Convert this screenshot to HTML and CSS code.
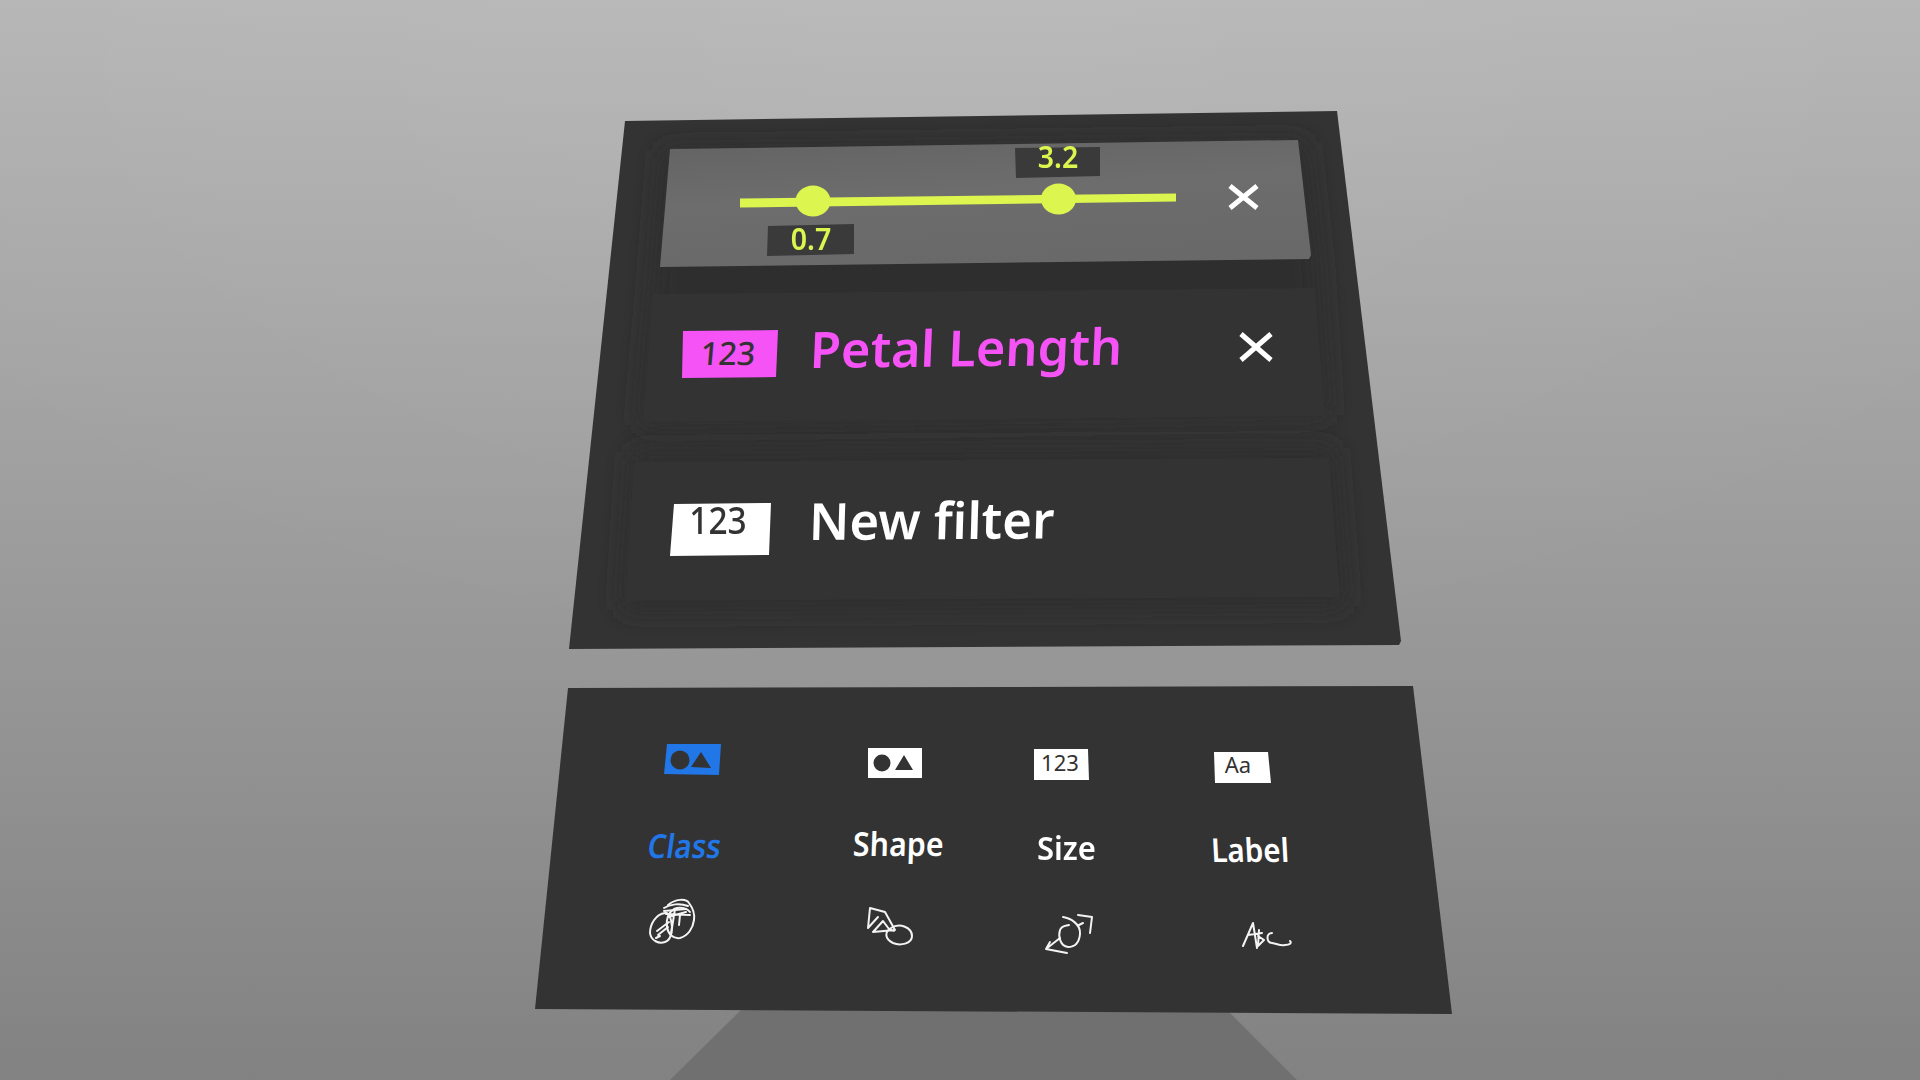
FILE: index.html
```html
<!DOCTYPE html>
<html lang="en">
<head>
  <meta charset="UTF-8">
  <meta name="viewport" content="width=device-width, initial-scale=1.0">
  <title>Filter panel</title>
  <link rel="stylesheet" href="styles.css">
</head>
<body>
  <div class="scene">
    <svg class="stage" width="1920" height="1080" viewBox="0 0 1920 1080">
      <defs>
        <filter id="soft" x="-10%" y="-20%" width="120%" height="140%">
          <feGaussianBlur stdDeviation="12"/>
        </filter>
        <linearGradient id="sliderFill" x1="0" y1="0" x2="0.3" y2="1">
          <stop offset="0" stop-color="#636363"/>
          <stop offset="0.5" stop-color="#6d6d6d"/>
          <stop offset="1" stop-color="#696969"/>
        </linearGradient>
      </defs>

      <!-- stand under the lower panel -->
      <polygon class="stand" points="741,1010 1227,1010 1297,1080 670,1080"/>

      <!-- filter window -->
      <polygon class="panel" points="625,121 1337,111 1401,641 1399,645 569,649"/>
      <polygon class="row-shade" points="663,150 1305,142 1318,262 1328,415 640,425 652,290"/>
      <polygon class="row-shade" points="632,452 1333,448 1345,606 622,610"/>
      <polygon class="slider-panel" points="670,149 1298,140 1311,255 1309,259 660,267"/>
      <polygon class="row" points="653,294 1315,288 1325,416 643,422"/>
      <polygon class="row" points="634,462 1329,458 1340,597 625,601"/>

      <!-- range slider -->
      <polygon class="lime" points="740,198.5 1176,193.5 1176,201.5 740,207.5"/>
      <ellipse class="lime" cx="813" cy="201" rx="17.5" ry="15.5"/>
      <ellipse class="lime" cx="1058.5" cy="199" rx="17.5" ry="15.5"/>
      <polygon class="value-box" points="1015,148 1100,147 1100,176 1016,178"/>
      <polygon class="value-box" points="768,226 854,224 854,254 767,256"/>
      <path class="close" d="M1230,186 L1257,208 M1257,186 L1230,208"/>
      <path class="close" d="M1241,334 L1271,360 M1271,334 L1241,360"/>

      <polygon class="badge-pink" points="683,331 778,330 776,377 682,378"/>
      <polygon class="badge-white" points="674,504 771,503 769,555 670,556"/>

      <!-- encodings window -->
      <polygon class="panel-low" points="568,688 1413,686 1452,1014 535,1009"/>
      <polygon class="badge-blue" points="667,744 721,744 719,775 664,774"/>
      <circle class="shape-dark" cx="680" cy="760" r="9.5"/>
      <polygon class="shape-dark" points="691,767 701,752 711,768"/>
      <polygon class="badge-white" points="868,748 922,748 922,778 868,778"/>
      <circle class="shape-dark" cx="882" cy="763" r="8.5"/>
      <polygon class="shape-dark" points="895,770 904,755 913,770"/>
      <polygon class="badge-white" points="1034,749 1088,749 1089,780 1034,780"/>
      <polygon class="badge-white" points="1214,752 1268,752 1271,783 1215,783"/>

      <!-- hand drawn marks -->
      <path class="sketch" d="M665,913 C656,914 650,924 650,933 C651,941 659,944 665,942 C672,940 673,928 671,920 C670,915 667,912 665,913"/>
      <path class="sketch" d="M668,905 C675,899 686,898 689,903 C692,907 695,913 694,920 C693,928 688,936 680,938 C673,939 668,934 667,927 C666,920 668,913 674,909 C681,906 688,909 690,912"/>
      <path class="sketch" d="M664,908 C670,904 680,903 688,906 M664,911 L686,909 M666,914 L690,915 M668,917 L686,912 M657,931 L669,922 M658,935 L668,927 M656,938 L660,936 M675,909 L671,934 M680,915 L679,925"/>
      <path class="sketch" d="M868,928 L870,908 L885,912 L895,930 L873,932 L883,921 L889,929 L894,931 M868,928 L878,917"/>
      <path class="sketch" d="M891,928 C900,922 912,928 912,936 C912,944 900,946 893,943 C885,939 884,932 891,928"/>
      <path class="sketch" d="M1063,917 C1070,918 1081,924 1080,934 C1079,945 1073,947 1068,947 C1060,946 1058,936 1060,930 C1062,925 1066,926 1069,925"/>
      <path class="sketch" d="M1078,915 L1092,917 L1090,933 M1079,925 L1083,923 M1060,938 L1046,949 L1067,953 M1046,949 L1050,942"/>
      <path class="sketch" d="M1243,946 L1253,923 L1257,948 M1248,935 L1262,933 M1259,930 L1258,946 L1264,940 L1258,936 M1272,933 C1266,933 1266,942 1272,943 C1278,944 1280,946 1285,945 C1290,945 1292,943 1290,941"/>
    </svg>

    <span class="label value value-high">3.2</span>
    <span class="label value value-low">0.7</span>

    <span class="label num num-pink">123</span>
    <span class="label title title-pink">Petal Length</span>

    <span class="label num num-white">123</span>
    <span class="label title title-new">New filter</span>

    <span class="label num-small num-size">123</span>
    <span class="label num-small num-aa">Aa</span>

    <span class="label enc enc-class">Class</span>
    <span class="label enc enc-shape">Shape</span>
    <span class="label enc enc-size">Size</span>
    <span class="label enc enc-label">Label</span>
  </div>
</body>
</html>
```

FILE: styles.css
```css
body {
  margin: 0;
  overflow: hidden;
  font-family: "Noto Sans", "Open Sans", sans-serif;
}
.scene {
  position: relative;
  width: 1920px;
  height: 1080px;
  background:
    radial-gradient(ellipse 1300px 700px at 50% 0, rgba(255,255,255,0.06), rgba(255,255,255,0)),
    linear-gradient(180deg, #b6b6b6 0, #979797 660px, #828282 1080px);
}
.stage {
  position: absolute;
  left: 0;
  top: 0;
}

/* shapes */
.stand { fill: #707070; }
.panel { fill: #333333; }
.panel-low { fill: #333333; }
.row-shade { fill: #2e2e2e; filter: url(#soft); }
.row { fill: #333333; }
.slider-panel { fill: url(#sliderFill); }
.lime { fill: #dcf54f; }
.value-box { fill: #3a3a3a; }
.close {
  fill: none;
  stroke: #ffffff;
  stroke-width: 5;
}
.badge-pink { fill: #f553f5; }
.badge-white { fill: #ffffff; }
.badge-blue { fill: #2176e8; }
.shape-dark { fill: #333333; }
.sketch {
  fill: none;
  stroke: #f4f4f4;
  stroke-width: 2;
  stroke-linecap: round;
  stroke-linejoin: round;
}

/* text */
.label {
  position: absolute;
  line-height: 1;
  white-space: nowrap;
}
.value {
  width: 84px;
  text-align: center;
  font-size: 30px;
  font-weight: 600;
  color: #dcf54f;
  transform: scaleX(0.95);
}
.value-high { left: 1016px; top: 142px; }
.value-low { left: 769px; top: 224px; }

.num {
  width: 96px;
  text-align: center;
  font-weight: 500;
  color: #333333;
}
.num-pink {
  left: 680px;
  top: 337px;
  font-size: 32px;
  transform: skewX(-5deg);
}
.num-white {
  left: 670px;
  top: 500px;
  font-size: 38px;
  transform: scaleX(0.88);
}
.num-small {
  width: 54px;
  text-align: center;
  font-size: 22px;
  color: #333333;
}
.num-size { left: 1033px; top: 751px; }
.num-aa { left: 1211px; top: 753px; }

.title {
  font-size: 50px;
  font-weight: 600;
  transform-origin: left center;
}
.title-pink {
  left: 810px;
  top: 324px;
  color: #f553f5;
  transform: rotate(-0.6deg) skewX(-3deg) scaleX(1.012);
}
.title-new {
  left: 809px;
  top: 495px;
  font-size: 51px;
  color: #ffffff;
  transform: rotate(-0.4deg) skewX(-2deg);
}

.enc {
  font-size: 33px;
  font-weight: 600;
  color: #ffffff;
  transform-origin: left center;
}
.enc-class {
  left: 648px;
  top: 829px;
  color: #2176e8;
  transform: skewX(-8deg) scaleX(0.89);
}
.enc-shape { left: 853px; top: 827px; transform: skewX(-2deg) scaleX(0.92); }
.enc-size { left: 1037px; top: 831px; transform: scaleX(0.94); }
.enc-label { left: 1211px; top: 833px; transform: skewX(3deg) scaleX(0.9); }
```
